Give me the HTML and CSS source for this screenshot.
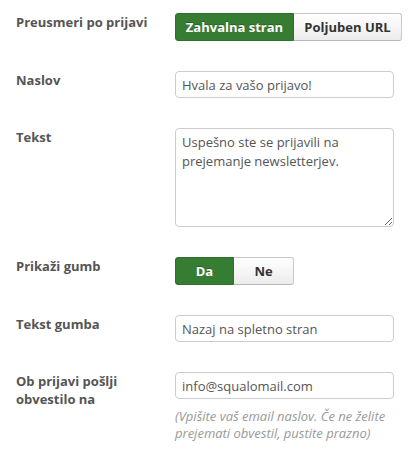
FILE: index.html
```html
<!DOCTYPE html>
<html>
<head>
<meta charset="utf-8">
<link rel="stylesheet" href="styles.css">
</head>
<body>
<form class="form">
  <div class="label">Preusmeri po prijavi</div>
  <div class="control">
    <div class="btn-group btn-group-wide">
      <span class="btn btn-active">Zahvalna stran</span>
      <span class="btn">Poljuben URL</span>
    </div>
  </div>

  <div class="label">Naslov</div>
  <div class="control">
    <input class="input" type="text" value="Hvala za vašo prijavo!">
  </div>

  <div class="label">Tekst</div>
  <div class="control">
    <textarea class="textarea">Uspešno ste se prijavili na prejemanje newsletterjev.</textarea>
  </div>

  <div class="label">Prikaži gumb</div>
  <div class="control">
    <div class="btn-group btn-group-yn">
      <span class="btn btn-active">Da</span>
      <span class="btn">Ne</span>
    </div>
  </div>

  <div class="label">Tekst gumba</div>
  <div class="control">
    <input class="input" type="text" value="Nazaj na spletno stran">
  </div>

  <div class="label label-narrow">Ob prijavi pošlji obvestilo na</div>
  <div class="control">
    <input class="input" type="text" value="info@squalomail.com">
    <p class="help">(Vpišite vaš email naslov. Če ne želite prejemati obvestil, pustite prazno)</p>
  </div>
</form>
</body>
</html>
```
FILE: styles.css
```css
html, body {
  margin: 0;
  padding: 0;
  background: #fff;
}
body {
  font-family: "Open Sans", "Liberation Sans", sans-serif;
  font-size: 13px;
  color: #555;
}
.form {
  display: grid;
  grid-template-columns: 159px 1fr;
  row-gap: 30px;
  padding: 13px 12px 0 16px;
}
.label {
  font-weight: 700;
  color: #555;
  line-height: 18px;
  margin-top: 0;
}
.label-narrow {
  width: 130px;
}
.control {
  display: flex;
  flex-direction: column;
  align-items: flex-start;
}
.btn-group {
  display: flex;
  height: 28px;
}
.btn-group-wide .btn:first-child { width: 119px; }
.btn-group-wide .btn:last-child { width: 108px; }
.btn-group-yn .btn { width: 60px; }
.btn-group-yn .btn:first-child { width: 59px; }
.btn {
  box-sizing: border-box;
  display: flex;
  align-items: center;
  justify-content: center;
  font-weight: 700;
  font-size: 13px;
  color: #333;
  background: linear-gradient(#ffffff, #ececec);
  border: 1px solid #c8c8c8;
  border-left: none;
  border-bottom-color: #b8b8b8;
}
.btn:first-child {
  border-left: 1px solid #c8c8c8;
  border-radius: 3px 0 0 3px;
}
.btn:last-child {
  border-radius: 0 3px 3px 0;
}
.btn-active {
  background: #367c33;
  color: #fff;
  border: 1px solid #2f6f2c;
  text-shadow: 0 -1px 0 rgba(0,0,0,0.25);
}
.btn-active:first-child {
  border-left: 1px solid #2f6f2c;
}
.input, .textarea {
  box-sizing: border-box;
  width: 219px;
  font-family: "Open Sans", "Liberation Sans", sans-serif;
  font-size: 13px;
  color: #555;
  border: 1px solid #cccccc;
  border-radius: 4px;
  background: #fff;
  margin: 0;
  outline: none;
}
.input {
  height: 27px;
  padding: 3px 6px;
  line-height: 19px;
}
.textarea {
  height: 99px;
  padding: 4px 6px;
  line-height: 19px;
  resize: vertical;
  overflow: hidden;
}
.help {
  margin: 9px 0 0 0;
  font-style: italic;
  color: #999;
  font-size: 13px;
  line-height: 17px;
  width: 222px;
}
```
